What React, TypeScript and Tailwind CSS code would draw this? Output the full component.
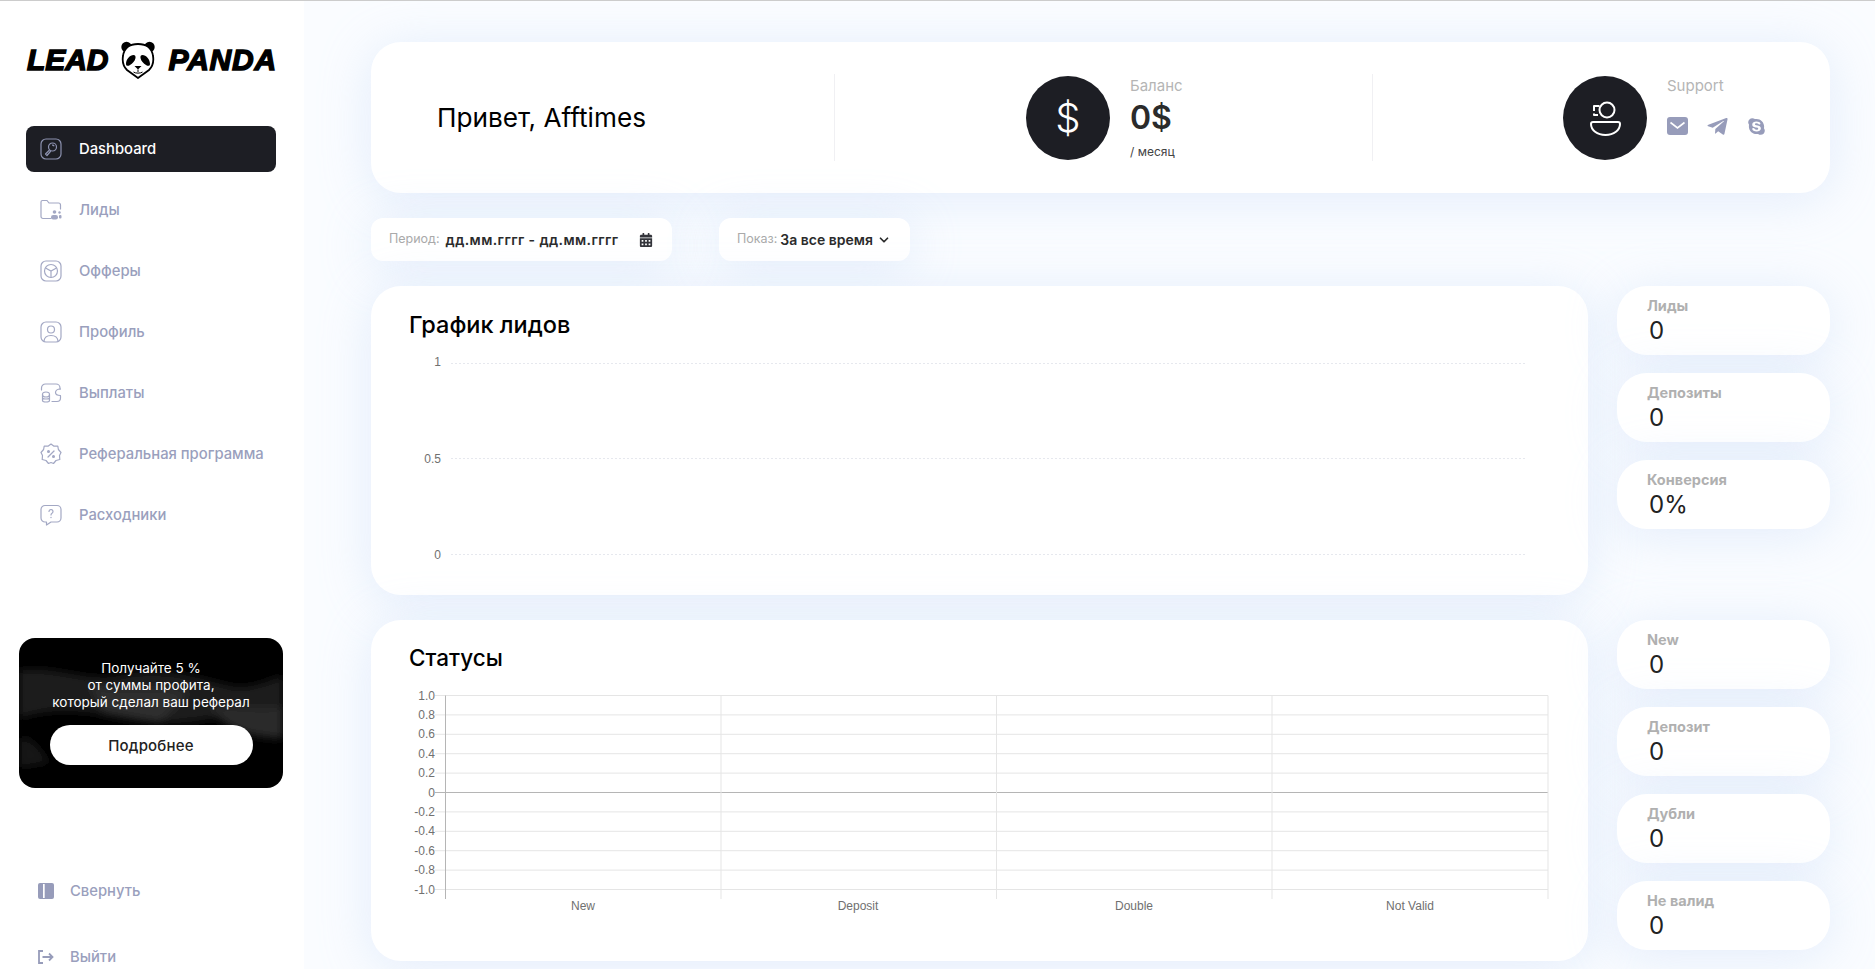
import React from 'react';
import { ChevronDown } from 'lucide-react';
import { FaSkype, FaCalendarAlt, FaTelegramPlane } from 'react-icons/fa';

const font = "font-['Inter',sans-serif]";

const IconDashboard = () => (
  <svg width="22" height="22" viewBox="0 0 22 22" fill="none" stroke="currentColor" strokeWidth="1.2">
    <rect x="1" y="1" width="20" height="20" rx="5" />
    <circle cx="12.5" cy="9" r="4" />
    <path d="M9.5 12 L5.5 16 L7 17.5 L10.8 13" strokeLinejoin="round" />
    <path d="M12 7.2a2 2 0 0 1 2.2 1" />
  </svg>
);

const IconLeads = () => (
  <svg width="22" height="22" viewBox="0 0 22 22" fill="none" stroke="currentColor" strokeWidth="1.2">
    <path d="M11 19.5H3a2 2 0 0 1-2-2V3a1.5 1.5 0 0 1 1.5-1.500H7l2 2.500h9.500a2 2 0 0 1 2 2v4" strokeLinecap="round" />
    <circle cx="14.500" cy="13" r="1.800" fill="currentColor" stroke="none" />
    <rect x="11" y="16" width="7" height="4.500" rx="2.200" fill="currentColor" stroke="none" />
    <circle cx="19.500" cy="13.500" r="1.200" fill="currentColor" stroke="none" />
    <rect x="19" y="16" width="2.500" height="3.500" rx="1" fill="currentColor" stroke="none" />
  </svg>
);

const IconOffers = () => (
  <svg width="22" height="22" viewBox="0 0 22 22" fill="none" stroke="currentColor" strokeWidth="1.2">
    <rect x="1" y="1" width="20" height="20" rx="5" />
    <circle cx="11" cy="11" r="6.500" />
    <path d="M5.500 8 L11 11 L16.500 8 M11 11 V17.500" />
  </svg>
);

const IconProfile = () => (
  <svg width="22" height="22" viewBox="0 0 22 22" fill="none" stroke="currentColor" strokeWidth="1.2">
    <rect x="1" y="1" width="20" height="20" rx="5" />
    <circle cx="11" cy="8.500" r="3.500" />
    <path d="M4 20 C4.500 15.500 7.500 14.500 11 14.500 C14.500 14.500 17.500 15.500 18 20" />
  </svg>
);

const IconPayouts = () => (
  <svg width="22" height="22" viewBox="0 0 22 22" fill="none" stroke="currentColor" strokeWidth="1.2">
    <path d="M1.500 8 V6 a4 4 0 0 1 4-4 H16 a4 4 0 0 1 4 4 v1" strokeLinecap="round" />
    <path d="M20.500 14 v2 a3.500 3.500 0 0 1-3.500 3.500 H12" strokeLinecap="round" />
    <path d="M20.500 7 C17 7 15.500 9 15.500 10.500 C15.500 12.500 17.500 13.500 20.500 13.500" strokeLinecap="round" />
    <ellipse cx="6" cy="12.500" rx="3.500" ry="2.500" />
    <path d="M2.500 12.500 V18.500 C2.500 20.500 9.500 20.500 9.500 18.500 V12.500 M2.500 15.500 C2.500 17.500 9.500 17.500 9.500 15.500" />
  </svg>
);

const IconReferral = () => (
  <svg width="22" height="22" viewBox="0 0 22 22" fill="none" stroke="currentColor" strokeWidth="1.2" strokeLinejoin="round">
    <path d="M11 1 L14 3.200 L17.800 3.200 L18.400 6.500 L21 9.500 L19.500 12.500 L19.800 16.500 L16 17.500 L13.500 20.500 L11 19.500 L8.500 20.500 L6 17.500 L2.200 16.500 L2.500 12.500 L1 9.500 L3.600 6.500 L4.200 3.200 L8 3.200 Z" />
    <path d="M14 8 L8 14" strokeLinecap="round" />
    <circle cx="8.500" cy="8.500" r="0.900" fill="currentColor" />
    <circle cx="13.500" cy="13.500" r="0.900" fill="currentColor" />
  </svg>
);

const IconSupplies = () => (
  <svg width="22" height="22" viewBox="0 0 22 22" fill="none" stroke="currentColor" strokeWidth="1.2" strokeLinejoin="round">
    <path d="M5 1.500 H17 a4 4 0 0 1 4 4 V14 a4 4 0 0 1-4 4 H11 L6.500 21 V18 H5 a4 4 0 0 1-4-4 V5.500 a4 4 0 0 1 4-4 Z" />
    <path d="M9 7.500 a2 2 0 1 1 3 1.800 c-.7.400-1 .8-1 1.700" strokeLinecap="round" />
    <circle cx="11" cy="13.500" r="0.700" fill="currentColor" stroke="none" />
  </svg>
);

const IconCollapse = () => (
  <svg width="16" height="16" viewBox="0 0 16 16">
    <rect width="16" height="16" rx="2" fill="#979cba" />
    <rect x="5" y="1" width="1.700" height="14" fill="#fff" />
  </svg>
);

const IconLogout = () => (
  <svg width="16" height="14" viewBox="0 0 16 14" fill="none" stroke="#979cba" strokeWidth="1.800">
    <path d="M5 1 H1 V13 H5" />
    <path d="M4.500 7 H14.500 M11 3.500 L14.500 7 L11 10.500" />
  </svg>
);

const IconSupport = () => (
  <svg width="34" height="36" viewBox="0 0 34 36" fill="none" stroke="#fff" strokeWidth="2" strokeLinejoin="round">
    <circle cx="19" cy="10" r="7.500" />
    <path d="M11.500 6 H6 V11 M6 13.500 V15 H10" />
    <path d="M5 22 H30 a2 2 0 0 1 2 2 C32 30 26 35 17.500 35 C9 35 3 30 3 24 a2 2 0 0 1 2-2 Z" />
  </svg>
);

const IconMail = () => (
  <svg width="21" height="18" viewBox="0 0 21 18">
    <rect width="21" height="18" rx="3" fill="#979cba" />
    <path d="M3.500 5.500 L10.500 11 L17.500 5.500" fill="none" stroke="#fff" strokeWidth="1.600" />
  </svg>
);

const PandaLogo = () => (
  <svg width="34" height="38" viewBox="0 0 34 38">
    <circle cx="5.500" cy="6" r="5.200" fill="#000" />
    <circle cx="28.500" cy="6" r="5.200" fill="#000" />
    <path d="M17 3 C25 3 31 7 32 15 C33 21 31 26 28 29 L17 37 L6 29 C3 26 1 21 2 15 C3 7 9 3 17 3 Z" fill="#fff" stroke="#000" strokeWidth="1.800" />
    <path d="M12.500 14 C9 14 5 18 5 23 C5 25 7 25.500 9 24 C11.500 22.500 14 20 14.500 17 C14.800 15 14 14 12.500 14 Z" fill="#000" />
    <path d="M21.500 14 C25 14 29 18 29 23 C29 25 27 25.500 25 24 C22.500 22.500 20 20 19.500 17 C19.200 15 20 14 21.500 14 Z" fill="#000" />
    <path d="M13.500 25 H20.500 L17 28.500 Z" fill="#000" />
    <path d="M17 28.500 V31 M12.500 31 C14 32.500 20 32.500 21.500 31" fill="none" stroke="#000" strokeWidth="1" />
  </svg>
);

const navItems = [
  { label: 'Dashboard', Icon: IconDashboard, active: true },
  { label: 'Лиды', Icon: IconLeads },
  { label: 'Офферы', Icon: IconOffers },
  { label: 'Профиль', Icon: IconProfile },
  { label: 'Выплаты', Icon: IconPayouts },
  { label: 'Реферальная программа', Icon: IconReferral },
  { label: 'Расходники', Icon: IconSupplies },
];

const Sidebar = () => (
  <aside className="w-[304px] shrink-0 bg-white flex flex-col">
    <div className="mt-[40px] ml-[27px] w-[250px] h-[37px] flex items-center justify-between">
      <span className="text-[30px] leading-[37px] font-black italic text-black tracking-[-0.100px] [-webkit-text-stroke:1.400px_black] font-['Liberation_Sans',sans-serif]">LEAD</span>
      <PandaLogo />
      <span className="text-[30px] leading-[37px] font-black italic text-black tracking-[0.800px] [-webkit-text-stroke:1.400px_black] font-['Liberation_Sans',sans-serif]">PANDA</span>
    </div>
    <nav className="mt-[48px] ml-[26px] w-[250px] flex flex-col gap-[15px]">
      {navItems.map(({ label, Icon, active }) => (
        <div
          key={label}
          className={`h-[46px] rounded-lg flex items-center pl-[14px] gap-[17px] text-[14.800px] font-medium ${active ? 'bg-[#1d1e24] text-white' : 'text-[#9a9fbd]'}`}
        >
          <span className={active ? 'text-[#8d92b0]' : 'text-[#a3a8c4]'}><Icon /></span>
          <span>{label}</span>
        </div>
      ))}
    </nav>
    <div className="relative mt-[100px] ml-[19px] w-[264px] h-[151px] rounded-2xl bg-black overflow-hidden">
      <svg className="absolute inset-0" width="264" height="150" viewBox="0 0 264 150">
        <defs>
          <filter id="silk"><feGaussianBlur stdDeviation="4" /></filter>
        </defs>
        <g filter="url(#silk)">
          <path d="M0 32 C40 28 70 45 100 38 C140 28 170 38 210 48 C235 52 250 42 264 38 V75 C220 66 200 85 150 85 C100 85 60 62 0 80 Z" fill="#1c1c1c" />
          <path d="M70 45 C100 58 130 42 170 55 L140 85 L85 75 Z" fill="#2e2e2e" />
          <path d="M190 70 C220 66 240 74 264 68 V100 C240 100 210 95 190 70 Z" fill="#2a2a2a" />
          <path d="M0 100 C12 98 22 110 30 125 L0 130 Z" fill="#161616" />
        </g>
      </svg>
      <div className="relative pt-[22px] flex flex-col items-center text-white text-[13.500px] leading-[17px] text-center">
        <p>Получайте 5 %</p>
        <p>от суммы профита,</p>
        <p>который сделал ваш реферал</p>
        <button className="mt-[14px] w-[203px] h-[40px] rounded-full bg-white text-[#222] text-[15px] font-medium tracking-[0.200px]">Подробнее</button>
      </div>
    </div>
    <div className="mt-[91px] ml-[38px] h-[24px] flex items-center gap-[16px] text-[14.800px] font-medium text-[#9a9fbd]">
      <IconCollapse />
      <span>Свернуть</span>
    </div>
    <div className="mt-[42px] ml-[38px] h-[24px] flex items-center gap-[16px] text-[14.800px] font-medium text-[#9a9fbd]">
      <IconLogout />
      <span>Выйти</span>
    </div>
  </aside>
);

const cardShadow = 'shadow-[0_6px_50px_rgba(195,218,245,0.42)]';

const StatCard = ({ label, value }: { label: string; value: string }) => (
  <div className={`h-[69px] rounded-[30px] bg-white pl-[30px] pt-[11px] ${cardShadow}`}>
    <div className="text-[14.500px] leading-[18px] font-bold text-[#b0b0b0]">{label}</div>
    <div className="ml-[2px] mt-[1px] text-[24px] leading-[30px] text-[#222]">{value}</div>
  </div>
);

const leadRows = [
  { t: '1', y: 18.500, dy: 2 },
  { t: '0.5', y: 113.500, dy: 4 },
  { t: '0', y: 209.500, dy: 4 },
];

const LeadChart = () => (
  <svg className="block mt-[6px]" width="1217" height="230" viewBox="0 0 1217 230">
    {leadRows.map(({ t, y, dy }) => (
      <g key={t}>
        <line x1="80" x2="1155" y1={y} y2={y} stroke="#e6e8ee" strokeDasharray="2 2" />
        <text x="70" y={y + dy} textAnchor="end" fontSize="12" fill="#707070" fontFamily="Liberation Sans">{t}</text>
      </g>
    ))}
  </svg>
);

const yLabels = ['1.0', '0.8', '0.6', '0.4', '0.2', '0', '-0.2', '-0.4', '-0.6', '-0.8', '-1.0'];
const xCols = [74.500, 350, 625.500, 901, 1177];
const xLabels = [['New', 212], ['Deposit', 487], ['Double', 763], ['Not Valid', 1039]] as const;

const StatusChart = () => (
  <svg className="block mt-[8px]" width="1217" height="240" viewBox="0 0 1217 240">
    {yLabels.map((t, i) => {
      const y = 15.500 + i * 19.400;
      return (
        <g key={t}>
          <line x1="64" x2="1177" y1={y} y2={y} stroke={t === '0' ? '#b5b5b5' : '#e5e5e5'} />
          <text x="64" y={y + 4} textAnchor="end" fontSize="12" fill="#707070" fontFamily="Liberation Sans">{t}</text>
        </g>
      );
    })}
    {xCols.map((x, i) => (
      <line key={x} x1={x} x2={x} y1="15.500" y2="219" stroke={i === 0 ? '#b5b5b5' : '#e5e5e5'} />
    ))}
    {xLabels.map(([t, x]) => (
      <text key={t} x={x} y="229.500" textAnchor="middle" fontSize="12" fill="#707070" fontFamily="Liberation Sans">{t}</text>
    ))}
  </svg>
);

const Header = () => (
  <div className={`h-[151px] rounded-[30px] bg-white flex items-center ${cardShadow}`}>
    <div className="w-[464px] h-[87px] flex items-center pl-[66px] border-r border-[#f0f0f3] text-[26.200px] text-black">
      Привет, Afftimes
    </div>
    <div className="w-[538px] h-[87px] flex items-center pl-[191px] border-r border-[#f0f0f3]">
      <div className="w-[84px] h-[84px] rounded-full bg-[#1d1e24] flex items-center justify-center text-white text-[40px] leading-none font-light">
        $
      </div>
      <div className="ml-[20px] h-[84px] flex flex-col">
        <div className="text-[15px] leading-[20px] text-[#b5b5b5]">Баланс</div>
        <div className="mt-[3px] text-[32px] leading-[38px] font-semibold text-[#2b2b2b]">0$</div>
        <div className="mt-[7px] text-[12px] leading-[16px] text-[#444]">/ месяц</div>
      </div>
    </div>
    <div className="h-[87px] flex items-center pl-[190px]">
      <div className="w-[84px] h-[84px] rounded-full bg-[#1d1e24] flex items-center justify-center">
        <IconSupport />
      </div>
      <div className="ml-[20px] h-[84px] flex flex-col">
        <div className="text-[15px] leading-[20px] text-[#b5b5b5]">Support</div>
        <div className="mt-[19px] flex items-center gap-[18px] text-[#979cba]">
          <IconMail />
          <FaTelegramPlane size={23} />
          <FaSkype size={19} />
        </div>
      </div>
    </div>
  </div>
);

const Filters = () => (
  <div className="mt-[25px] flex gap-[47px] h-[43px]">
    <div className={`w-[301px] rounded-xl bg-white flex items-center pl-[18px] ${cardShadow}`}>
      <span className="text-[12.500px] text-[#aaa]">Период:</span>
      <span className="ml-[6px] text-[14px] font-semibold tracking-[0.400px] text-[#2b2b2b]">дд.мм.гггг - дд.мм.гггг</span>
      <FaCalendarAlt size={14} className="ml-[21px] text-[#33343a]" />
    </div>
    <div className={`w-[191px] rounded-xl bg-white flex items-center pl-[18px] ${cardShadow}`}>
      <span className="text-[12.500px] text-[#aaa]">Показ:</span>
      <span className="ml-[3px] text-[14px] font-semibold text-[#2b2b2b]">За все время</span>
      <ChevronDown size={14} strokeWidth={3} className="ml-[4px] text-[#2b2b2b]" />
    </div>
  </div>
);

export default function App() {
  return (
    <div className={`h-screen overflow-hidden flex border-t border-[#cccccc] bg-[#fafcff] ${font}`}>
      <Sidebar />
      <main className="flex-1 pl-[67px] pr-[45px] pt-[41px]">
        <Header />
        <Filters />
        <div className="mt-[25px] flex gap-[29px]">
          <section className={`w-[1217px] h-[309px] rounded-[30px] bg-white ${cardShadow}`}>
            <h2 className="pt-[25px] pl-[38px] text-[23.500px] leading-[28px] font-medium text-black">График лидов</h2>
            <LeadChart />
          </section>
          <div className="w-[213px] flex flex-col gap-[18px]">
            <StatCard label="Лиды" value="0" />
            <StatCard label="Депозиты" value="0" />
            <StatCard label="Конверсия" value="0%" />
          </div>
        </div>
        <div className="mt-[25px] flex gap-[29px]">
          <section className={`w-[1217px] h-[341px] rounded-[30px] bg-white ${cardShadow}`}>
            <h2 className="pt-[24px] pl-[38px] text-[22.500px] leading-[28px] font-medium text-black">Статусы</h2>
            <StatusChart />
          </section>
          <div className="w-[213px] flex flex-col gap-[18px]">
            <StatCard label="New" value="0" />
            <StatCard label="Депозит" value="0" />
            <StatCard label="Дубли" value="0" />
            <StatCard label="Не валид" value="0" />
          </div>
        </div>
      </main>
    </div>
  );
}
